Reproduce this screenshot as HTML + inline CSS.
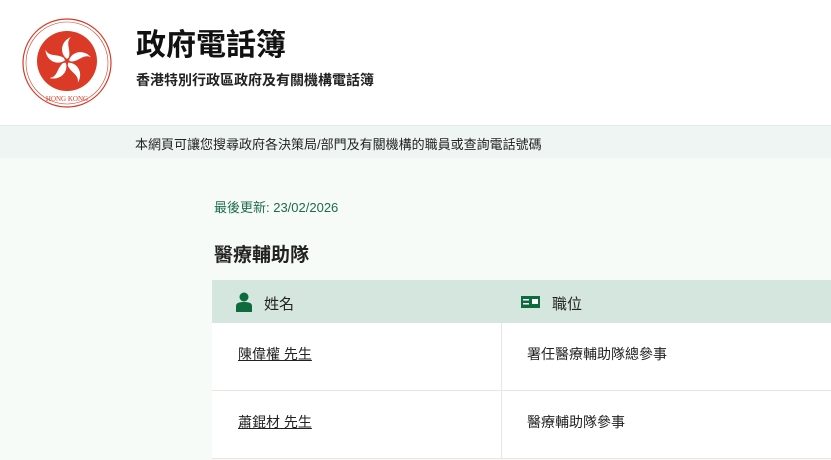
<!DOCTYPE html>
<html><head><meta charset="utf-8"><style>
*{margin:0;padding:0;box-sizing:border-box}
body{width:831px;height:460px;overflow:hidden;background:#f6fbf8;font-family:"Liberation Sans","Noto Sans CJK TC",sans-serif;color:#222;position:relative}
.hdr{position:absolute;left:0;top:0;width:831px;height:125px;background:#fff}
.t1{position:absolute;left:136px;top:26px;font-size:30px;font-weight:bold;color:#111;line-height:40px}
.t2{position:absolute;left:136px;top:70px;font-size:14px;font-weight:bold;color:#222;line-height:20px}
.ban{position:absolute;left:0;top:125px;width:831px;height:33px;background:#eef5f2;border-top:1px solid #e3ece8}
.ban span{position:absolute;left:135px;top:8px;font-size:13px;color:#222}
.upd{position:absolute;left:214px;top:197px;font-size:13px;color:#1f6b4a}
.h2{position:absolute;left:214px;top:240px;font-size:19px;font-weight:bold;color:#222}
.tbl{position:absolute;left:212px;top:280px;width:619px}
.th{height:43px;background:#d5e6de;position:relative;font-size:15px}
.row{height:68px;background:#fff;border-bottom:1px solid #eee5e0;position:relative;font-size:14px}
.c1{position:absolute;left:26px}
.c2{position:absolute;left:289px;top:0;bottom:0;border-left:1px solid #eee5e0;padding-left:25px}
a{color:#222;text-decoration:underline}
</style></head><body>
<div class="hdr">
<svg style="position:absolute;left:21px;top:17px" width="92" height="92" viewBox="0 0 92 92">
<circle cx="46" cy="46" r="44" fill="#fff" stroke="#d63a26" stroke-width="1.2"/>
<circle cx="46" cy="46" r="41" fill="none" stroke="#d63a26" stroke-width="0.6"/>
<circle cx="46" cy="44" r="30" fill="#db3a26"/>
<g fill="#fff" transform="translate(46,44)">
<g id="p"><path d="M0,-2 C-8,-8 -6,-20 4,-24 C-2,-18 4,-12 2,-4 Z"/></g>
<use href="#p" transform="rotate(72)"/><use href="#p" transform="rotate(144)"/><use href="#p" transform="rotate(216)"/><use href="#p" transform="rotate(288)"/>
</g>
<text x="46" y="84" font-size="7" fill="#d63a26" text-anchor="middle" font-family="Liberation Serif">HONG KONG</text>
</svg>
<div class="t1">政府電話簿</div>
<div class="t2">香港特別行政區政府及有關機構電話簿</div>
</div>
<div class="ban"><span>本網頁可讓您搜尋政府各決策局/部門及有關機構的職員或查詢電話號碼</span></div>
<div class="upd">最後更新: 23/02/2026</div>
<div class="h2">醫療輔助隊</div>
<div class="tbl">
<div class="th">
<svg style="position:absolute;left:23px;top:12px" width="18" height="20" viewBox="0 0 18 20"><circle cx="9" cy="5" r="4.5" fill="#0e6b3e"/><path d="M1,20 L1,14 C1,11 4,10 9,10 C14,10 17,11 17,14 L17,20 Z" fill="#0e6b3e"/></svg>
<span style="position:absolute;left:52px;top:13px">姓名</span>
<svg style="position:absolute;left:309px;top:16px" width="19" height="12" viewBox="0 0 19 12"><rect width="19" height="12" fill="#0e6b3e"/><rect x="2" y="3" width="6" height="1.5" fill="#fff"/><rect x="2" y="7" width="6" height="1.5" fill="#fff"/><rect x="11" y="3" width="6" height="5" fill="#fff"/></svg>
<span style="position:absolute;left:340px;top:13px">職位</span>
</div>
<div class="row"><a class="c1" style="top:64px;top:21px" href="#">陳偉權 先生</a><div class="c2"><span style="position:absolute;left:25px;top:21px;white-space:nowrap">署任醫療輔助隊總參事</span></div></div>
<div class="row"><a class="c1" style="top:21px" href="#">蕭錕材 先生</a><div class="c2"><span style="position:absolute;left:25px;top:21px;white-space:nowrap">醫療輔助隊參事</span></div></div>
</div>
</body></html>
